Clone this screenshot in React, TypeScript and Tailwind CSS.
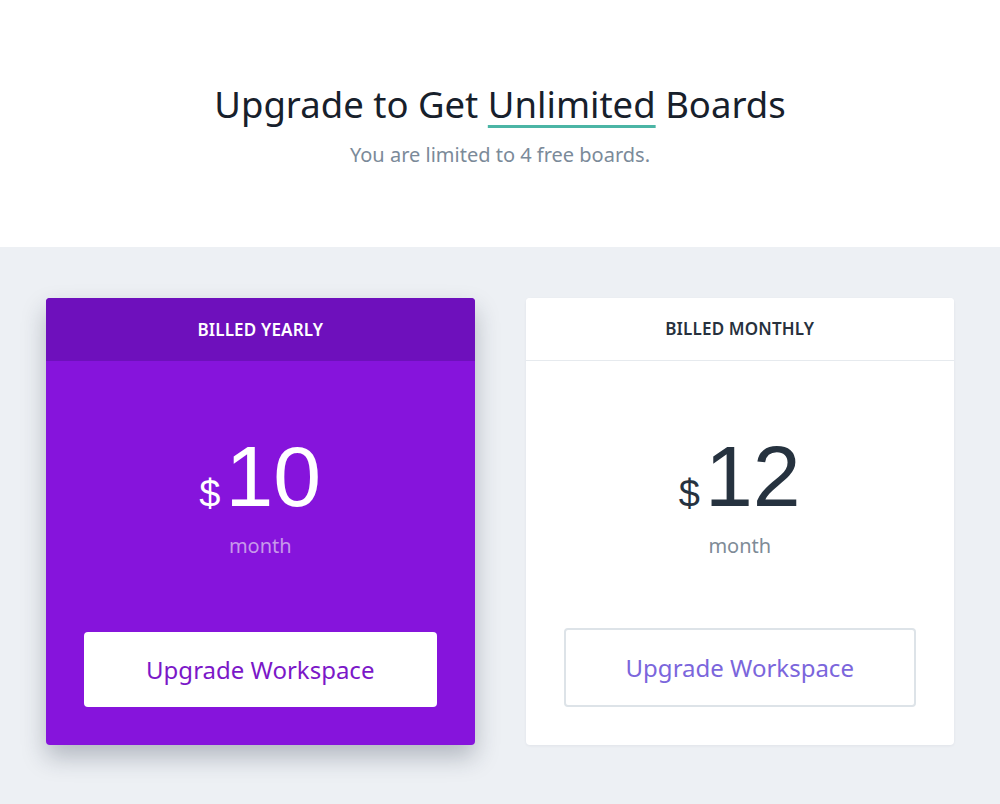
import React from 'react';

const font = { fontFamily: '"Noto Sans", "Liberation Sans", sans-serif' };
const priceFont = { fontFamily: '"Liberation Sans", "Noto Sans", sans-serif' };

interface PlanProps {
  label: string;
  price: string;
  featured?: boolean;
}

const PlanCard = ({ label, price, featured }: PlanProps) => {
  return (
    <div
      className={`flex-1 h-[447px] rounded flex flex-col overflow-hidden ${
        featured ? 'bg-[#8614dc] shadow-[0_12px_24px_rgba(30,40,60,0.28)]' : 'bg-white shadow-[0_1px_3px_rgba(30,40,60,0.06)]'
      }`}
    >
      <div
        className={`h-[63px] flex items-center justify-center text-[17px] font-semibold tracking-[0.01em] ${
          featured ? 'bg-[#6e10bc] text-white' : 'bg-white text-[#27313d] border-b border-[#e6eaee]'
        }`}
      >
        {label}
      </div>
      <div className="flex-1 flex flex-col items-center pt-[78px]">
        <div className={`flex items-end h-[80px] ${featured ? 'text-white' : 'text-[#26323f]'}`} style={priceFont}>
          <span className="text-[38px] leading-none mb-[6px] mr-[5px]">$</span>
          <span className="text-[86px] leading-none">{price}</span>
        </div>
        <div className={`text-[20px] leading-[28px] mt-[13px] ${featured ? 'text-[#c699ea]' : 'text-[#7e8b97]'}`}>month</div>
      </div>
      <div className="px-[38px] pb-[38px]">
        {featured ? (
          <button className="w-full h-[75px] rounded bg-white text-[#7b17c8] text-[24px]">Upgrade Workspace</button>
        ) : (
          <button className="w-full h-[79px] rounded border-2 border-[#dde3e8] bg-white text-[#7b66dc] text-[24px]">
            Upgrade Workspace
          </button>
        )}
      </div>
    </div>
  );
};

export default function App() {
  return (
    <div className="w-[1000px] h-[804px] flex flex-col bg-[#edf0f4]" style={font}>
      <div className="h-[247px] bg-white flex flex-col items-center pt-[80px]">
        <h1 className="text-[36.5px] text-[#17202b] leading-[48px]">
          Upgrade to Get{' '}
          <span className="underline decoration-[3px] underline-offset-[7px] decoration-[#4bb5a5]">Unlimited</span> Boards
        </h1>
        <p className="text-[20px] text-[#7b8a99] mt-[12px]">You are limited to 4 free boards.</p>
      </div>
      <div className="flex gap-[51px] px-[46px] pt-[51px]">
        <PlanCard label="BILLED YEARLY" price="10" featured />
        <PlanCard label="BILLED MONTHLY" price="12" />
      </div>
    </div>
  );
}
